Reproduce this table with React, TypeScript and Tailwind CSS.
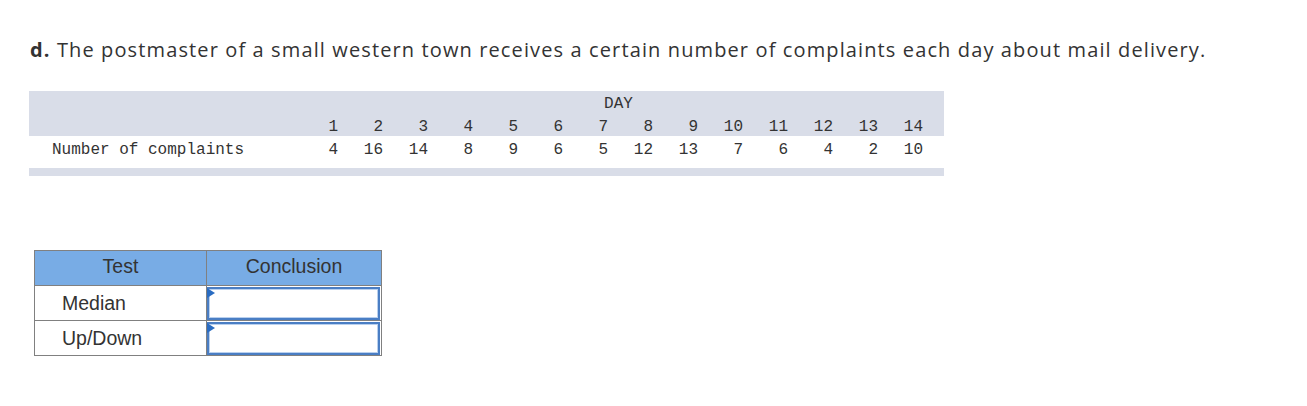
import React from "react";

const days = [1, 2, 3, 4, 5, 6, 7, 8, 9, 10, 11, 12, 13, 14];
const vals = [4, 16, 14, 8, 9, 6, 5, 12, 13, 7, 6, 4, 2, 10];

function InputCell() {
  return (
    <td className="border border-[#808080] p-0 h-[35px] w-[175px]">
      <div className="relative h-[33px] mr-[1px] border-2 border-[#4a7ec4] bg-white shadow-[inset_0_0_0_1px_#b9d0ee]">
        <div className="absolute z-10 left-[-2px] top-[-1px] w-0 h-0 border-y-[5px] border-y-transparent border-l-[8px] border-l-[#2a6cc2]" />
      </div>
    </td>
  );
}

export default function App() {
  return (
    <div className="w-[1307px] h-[406px] bg-white relative">
      <div className="pt-[36px] pl-[30px]">
        <p className="text-[20px] leading-[28px] tracking-[1.12px] text-[#333] font-['Open_Sans',sans-serif] whitespace-nowrap">
          <b>d.</b> The postmaster of a small western town receives a certain number of complaints each day about mail delivery.
        </p>
      </div>

      <div className="ml-[29px] mt-[27px] w-[915px] font-['Liberation_Mono',monospace] text-[16px] text-[#333]">
        <div className="bg-[#d9dde8]">
          <div className="flex h-[23px] pt-[4px]">
            <div className="w-[264px]" />
            <div className="flex-1 text-center leading-[19px]">DAY</div>
          </div>
          <div className="flex h-[22px] pt-[4px]">
            <div className="w-[264px]" />
            {days.map((d) => (
              <div key={d} className="w-[45px] text-right leading-[18px]">{d}</div>
            ))}
          </div>
        </div>
        <div className="flex h-[24px] pt-[4px]">
          <div className="w-[264px] pl-[23px] leading-[20px]">Number of complaints</div>
          {vals.map((v, i) => (
            <div key={i} className="w-[45px] text-right leading-[20px]">{v}</div>
          ))}
        </div>
        <div className="h-[8px]" />
        <div className="h-[8px] bg-[#d9dde8]" />
      </div>

      <table className="ml-[34px] mt-[74px] border-collapse font-['Liberation_Sans',Arial,sans-serif] text-[19.5px] text-[#333]">
        <thead>
          <tr className="bg-[#78ace5] h-[35px]">
            <th className="border border-[#808080] w-[172px] p-0 font-normal text-center leading-[31px] align-top">Test</th>
            <th className="border border-[#808080] w-[175px] p-0 font-normal text-center leading-[31px] align-top">Conclusion</th>
          </tr>
        </thead>
        <tbody>
          <tr>
            <td className="border border-[#808080] pl-[27px] h-[35px] leading-[33px]">Median</td>
            <InputCell />
          </tr>
          <tr>
            <td className="border border-[#808080] pl-[27px] h-[35px] leading-[33px]">Up/Down</td>
            <InputCell />
          </tr>
        </tbody>
      </table>
    </div>
  );
}
